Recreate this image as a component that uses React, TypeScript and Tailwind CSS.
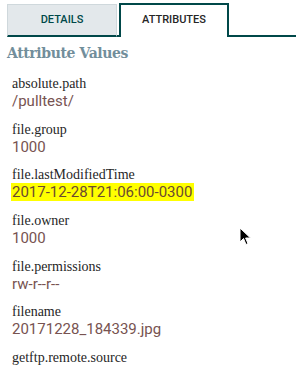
import React from "react";

const attrs: { name: string; value: string; highlight?: boolean }[] = [
  { name: "absolute.path", value: "/pulltest/" },
  { name: "file.group", value: "1000" },
  { name: "file.lastModifiedTime", value: "2017-12-28T21:06:00-0300", highlight: true },
  { name: "file.owner", value: "1000" },
  { name: "file.permissions", value: "rw-r--r--" },
  { name: "filename", value: "20171228_184339.jpg" },
  { name: "getftp.remote.source", value: "" },
];

export default function App() {
  return (
    <div className="relative w-[296px] h-[375px] overflow-hidden bg-white" style={{ fontFamily: "Roboto, 'Liberation Sans', sans-serif" }}>
      <div className="flex items-end pt-[3px] h-[37px]">
        <div className="w-[7px] h-full" />
        <div className="w-[110px] h-[33px] bg-[#e3e8eb] border-t border-l border-r border-[#cfd8dc] border-b-2 border-b-[#004849] flex items-center justify-center text-[11px] font-medium text-[#004849]">
          DETAILS
        </div>
        <div className="w-[2px] h-[2px] bg-[#004849]" />
        <div className="w-[110px] h-[34px] border-t-2 border-l-2 border-r-2 border-[#004849] bg-white flex items-center justify-center text-[11px] font-medium text-[#262626] pb-[1px]">
          ATTRIBUTES
        </div>
        <div className="flex-1 h-[2px] bg-[#004849]" />
      </div>
      <div className="pl-[7px] pt-[7px] text-[14px] font-bold text-[#728e9b] leading-[18px]" style={{ fontFamily: "'DejaVu Serif', 'Liberation Serif', serif", letterSpacing: "-0.4px" }}>
        Attribute Values
      </div>
      <div className="flex flex-col pl-[12px] pt-[13px] gap-[10.67px]">
        {attrs.map((a) => (
          <div key={a.name} className="flex flex-col">
            <div className="text-[14px] leading-[17px] text-[#262626]" style={{ fontFamily: "'Liberation Serif', serif" }}>
              {a.name}
            </div>
            <div className="text-[15px] leading-[18px] text-[#775351]">
              {a.highlight ? (
                <span className="bg-[#ffff00] -ml-[1px] pl-[1px] pr-[2px] text-[#6b4a30]">{a.value}</span>
              ) : (
                a.value || "\u00a0"
              )}
            </div>
          </div>
        ))}
      </div>
      <svg className="absolute left-[239px] top-[227px]" width="13" height="20" viewBox="0 0 13 20">
        <path d="M1 1 L1 15 L4.5 11.5 L7 17.5 L9 16.6 L6.6 11 L11.5 11 Z" fill="#000" stroke="#fff" strokeWidth="1" />
      </svg>
    </div>
  );
}
